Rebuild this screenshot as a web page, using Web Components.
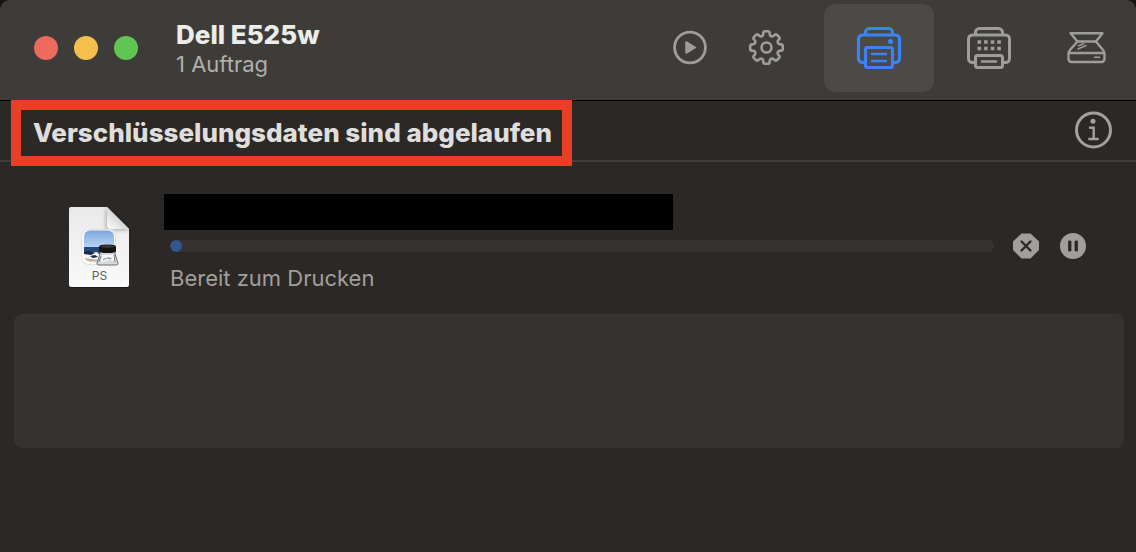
<!DOCTYPE html>
<html lang="de">
<head>
<meta charset="utf-8">
<meta name="viewport" content="width=device-width, initial-scale=1">
<title>Dell E525w</title>
<style>
body { margin: 0; min-height: 100vh; background: #2c2825; font-family: Inter, "Liberation Sans", sans-serif; }
</style>
</head>
<body>
<print-queue>
  <queue-toolbar slot="toolbar">
    <span slot="title">Dell E525w</span>
    <span slot="subtitle">1 Auftrag</span>
  </queue-toolbar>
  <queue-status slot="status">Verschlüsselungsdaten sind abgelaufen</queue-status>
  <print-job>Bereit zum Drucken</print-job>
  <empty-panel></empty-panel>
</print-queue>

<script>
const define = (name, html) => customElements.define(name, class extends HTMLElement {
  constructor() {
    super();
    this.attachShadow({ mode: 'open' }).innerHTML = html;
  }
});

const buttonReset = `
  button { appearance: none; border: 0; margin: 0; padding: 0; background: none; color: inherit; font: inherit;
    display: grid; place-items: center; }
  svg { display: block; }`;

function gearPath() {
  const at = (r, deg) => {
    const a = deg * Math.PI / 180;
    return (20 + r * Math.sin(a)).toFixed(2) + ' ' + (20 - r * Math.cos(a)).toFixed(2);
  };
  let d = 'M' + at(15.2, -12);
  for (let k = 0; k < 360; k += 45) {
    d += `Q${at(16.4, k - 10)} ${at(16.4, k - 6)}L${at(16.4, k + 6)}Q${at(16.4, k + 10)} ${at(15.2, k + 12)}`;
    d += `L${at(13.4, k + 14)}Q${at(11.2, k + 22.5)} ${at(13.4, k + 31)}L${at(15.2, k + 33)}`;
  }
  return d + 'Z';
}

define('print-queue', `
  <style>
    :host { display: block; }
    main { display: flex; flex-direction: column; }
  </style>
  <slot name="toolbar"></slot>
  <slot name="status"></slot>
  <main><slot></slot></main>`);

define('window-controls', `
  <style>
    :host { display: flex; gap: 16px; }
    ${buttonReset}
    button { width: 24px; height: 24px; border-radius: 50%; }
    .close { background: #ed6a5f; }
    .min { background: #f5bf4f; }
    .max { background: #61c555; }
  </style>
  <button class="close" aria-label="Schließen"></button>
  <button class="min" aria-label="Minimieren"></button>
  <button class="max" aria-label="Vergrößern"></button>`);

define('queue-toolbar', `
  <style>
    :host { display: block; background: #171614; }
    header { display: flex; align-items: center; box-sizing: border-box; height: 101px; padding: 0 8px 4px 34px;
      background: #3d3c38; border-bottom: 1px solid #000; border-radius: 10px 10px 0 0; }
    .names { flex: 1; margin-left: 38px; padding-top: 2px; white-space: nowrap; }
    h1 { margin: 0; font-size: 26px; line-height: 30px; font-weight: 800; color: #ececeb; }
    p { margin: 0; font-size: 22px; line-height: 28px; color: #b0afac; }
    nav { display: flex; align-items: center; color: #9e9d9a; }
    ${buttonReset}
    button { height: 88px; }
    .tool { width: 76px; }
    .tab { width: 110px; border-radius: 12px; }
    .tab[aria-pressed=true] { margin-left: 20px; background: #4b4a46; color: #3b82f7; }
    .scan { width: 84px; }
    svg { fill: none; stroke: currentColor; stroke-linecap: round; stroke-linejoin: round; }
    .solid { fill: currentColor; stroke: none; }
  </style>
  <header>
    <window-controls></window-controls>
    <div class="names">
      <h1><slot name="title"></slot></h1>
      <p><slot name="subtitle"></slot></p>
    </div>
    <nav>
      <button class="tool" aria-label="Fortsetzen">
        <svg width="40" height="40" viewBox="0 0 40 40" stroke-width="2.8"><circle cx="20" cy="19.5" r="15.4"/><path d="M16.200 14.200v10.600l9-5.300z" fill="currentColor" stroke-width="2"/></svg>
      </button>
      <button class="tool" aria-label="Einstellungen">
        <svg width="40" height="40" viewBox="0 0 40 40" stroke-width="2.600"><g transform="translate(.5 -.5)"><path d="${gearPath()}"/><circle cx="20" cy="20" r="5"/></g></svg>
      </button>
      <button class="tab" aria-label="Drucker" aria-pressed="true">
        <svg width="48" height="48" viewBox="0 0 48 48" stroke-width="3.200"><path d="M10.500 10V8.500a4 4 0 0 1 4-4h19a4 4 0 0 1 4 4V10"/><path d="M9.500 38.500H7.500a4 4 0 0 1-4-4V15a4 4 0 0 1 4-4h33a4 4 0 0 1 4 4v19.500a4 4 0 0 1-4 4h-2"/><rect x="10.500" y="23.500" width="27" height="20" rx="2"/><path d="M17 30h14M17 37h14" stroke-width="2.400"/><circle class="solid" cx="35.500" cy="17.500" r="2.600"/></svg>
      </button>
      <button class="tab" aria-label="Verbrauchsmaterial">
        <svg width="48" height="48" viewBox="0 0 48 48" stroke-width="3"><path d="M10.500 10V8.500a4 4 0 0 1 4-4h19a4 4 0 0 1 4 4V10"/><path d="M9.500 38.500H7.500a4 4 0 0 1-4-4V15a4 4 0 0 1 4-4h33a4 4 0 0 1 4 4v19.500a4 4 0 0 1-4 4h-2"/><rect x="10.500" y="31.500" width="27" height="12" rx="2"/><path d="M17 37.500h14" stroke-width="2.600"/><path d="M12.500 18h24M12.500 24.500h24" stroke-width="3.600" stroke-linecap="butt" stroke-dasharray="3.600 3"/></svg>
      </button>
      <button class="scan" aria-label="Scanner">
        <svg width="40" height="40" viewBox="-1 0 40 40" stroke-width="2.400"><path d="M3.500 5.200h32l-6.500 8.300H10.500z"/><path d="M10.500 13.500l-7.500 8.500c-1 1-1.500 2-1.500 3.500v5.500a3 3 0 0 0 3 3h30a3 3 0 0 0 3-3v-5.500c0-1.500-.5-2.500-1.500-3.500L29 13.500M2 25h35"/><path d="M11.500 17.800l5-2M11 21l8-3.500" stroke-width="1.500"/><path d="M27.500 29.300h5" stroke-width="1.600"/></svg>
      </button>
    </nav>
  </header>`);

define('queue-status', `
  <style>
    :host { display: flex; justify-content: space-between; align-items: flex-start; height: 59px; padding: 0 23px 0 21px;
      border-bottom: 2px solid #413d3b; }
    h2 { margin: 9px 0 0; padding: 0 10px 0 12px; font-size: 26px; line-height: 46px; font-weight: 800; color: #dfdedd;
      white-space: nowrap; outline: 10px solid #e93f26; }
    ${buttonReset}
    button { margin-top: 9px; color: #a3a19f; }
  </style>
  <h2><slot></slot></h2>
  <button aria-label="Information">
    <svg width="40" height="40" viewBox="0 0 40 40" fill="none" stroke="currentColor" stroke-width="3"><circle cx="20.500" cy="20" r="17"/><circle cx="20" cy="11.300" r="2.500" fill="currentColor" stroke="none"/><path d="M17 17.800h3.700v10.700M16.300 29h8.400" stroke-width="2.400" stroke-linecap="round"/></svg>
  </button>`);

define('document-icon', `
  <style>:host { display: block; } svg { display: block; overflow: visible; } text { font: 12px Inter, "Liberation Sans", sans-serif; }</style>
  <svg width="60" height="80" viewBox="0 0 60 80" role="img" aria-label="PostScript-Dokument">
    <defs>
      <linearGradient id="sky" x2="0" y2="1"><stop stop-color="#7ba5e0"/><stop offset="1" stop-color="#b9d3f3"/></linearGradient>
      <linearGradient id="fold" x1="0" y1="1" x2="1" y2="0"><stop stop-color="#fff"/><stop offset=".5" stop-color="#d7d7d7"/><stop offset="1" stop-color="#f5f5f5"/></linearGradient>
      <linearGradient id="page" x2="0" y2="1"><stop stop-color="#e9e9e9"/><stop offset="1" stop-color="#fafafa"/></linearGradient>
      <filter id="soft" x="-30%" y="-30%" width="160%" height="160%"><feGaussianBlur stdDeviation="2"/></filter>
      <clipPath id="paper"><path d="M2 0h36l22 22v56a2 2 0 0 1-2 2H2a2 2 0 0 1-2-2V2a2 2 0 0 1 2-2z"/></clipPath>
      <clipPath id="photo"><rect x="15" y="23.500" width="30" height="31" rx="6"/></clipPath>
    </defs>
    <path d="M0 78.500a2 2 0 0 0 2 2h56a2 2 0 0 0 2-2" fill="none" stroke="#111" stroke-opacity=".6"/>
    <g clip-path="url(#paper)">
      <path fill="url(#page)" d="M0 0h60v81H0z"/>
      <path d="M37 1v22h24z" fill="#666" opacity=".5" filter="url(#soft)"/>
    </g>
    <path d="M38 0v18a4 4 0 0 0 4 4h18z" fill="url(#fold)"/>
    <rect x="12.500" y="22.500" width="34" height="35" rx="7" fill="#f8f8f8" stroke="#e2e2e2"/>
    <g clip-path="url(#photo)">
      <path fill="url(#sky)" d="M15 23h30v17H15z"/>
      <path fill="#264779" d="M15 40h30v7H15z"/>
      <path fill="#f1f3f4" d="M15 45l6 1 7-1 3 3h14v8H15z"/>
      <path fill="#c4b299" d="M15 51l7 1 8 1v3H15z"/>
      <path fill="#1b2940" d="M15 45l5-1 6 2-4 2-7-1zM21 49l5-1 3 2-5 1z"/>
    </g>
    <path d="M31 44h15v3l3 9q.4 2-2 2H30q-2.500 0-2-2l3-9z" fill="#d7dadd" stroke="#6d6f70"/>
    <path d="M33 48h12l1 6-4-1-10 2z" fill="#f8fafb"/>
    <path d="M34 53l2-1.500 1 .8 2-2 1 2 2-1.500 1 1M30 55l2-6M46 55l-1-7" fill="none" stroke="#5a5d60" stroke-width=".8"/>
    <path d="M30 39.500q0-2 8.500-2t8.500 2V44q0 2-8.500 2T30 44z" fill="#151515"/>
    <ellipse cx="38.500" cy="39.500" rx="7" ry="1.200" fill="#3d3d3d"/>
    <text x="30.500" y="73" text-anchor="middle" fill="#606060">PS</text>
  </svg>`);

define('print-job', `
  <style>
    :host { display: grid; grid-template-columns: 60px 1fr auto; padding: 32px 50px 0 69px; }
    document-icon { margin-top: 13px; }
    .body { margin-left: 35px; min-width: 0; }
    .redacted { max-width: 509px; height: 36px; background: #000; }
    progress { appearance: none; display: block; box-sizing: border-box; width: calc(100% - 6px); height: 12px; margin: 10px 0 10px 6px;
      border: 0; border-radius: 6px; overflow: hidden; background: #363230; }
    progress::-webkit-progress-bar { background: #363230; border-radius: 6px; }
    progress::-webkit-progress-value { background: #33568f; border-radius: 6px; }
    p { margin: 0 0 0 6px; font-size: 22px; line-height: 32px; color: #a19f9d; }
    .actions { display: flex; align-items: flex-start; gap: 20px; margin: 38px 0 0 18px; }
    ${buttonReset}
  </style>
  <document-icon></document-icon>
  <div class="body">
    <div class="redacted"></div>
    <progress aria-label="Druckfortschritt" max="824" value="12"></progress>
    <p><slot></slot></p>
  </div>
  <div class="actions">
    <button aria-label="Auftrag abbrechen">
      <svg width="28" height="28" viewBox="0 0 28 28"><path d="M9.500 1.500h9L27 9.500v8.500l-8.500 8.500h-9L1 18V9.500z" fill="#a19f9d"/><path d="M9.500 9.500l9 9m0-9l-9 9" stroke="#2c2825" stroke-width="2.400" stroke-linecap="round"/></svg>
    </button>
    <button aria-label="Auftrag anhalten">
      <svg width="26" height="28" viewBox="0 0 26 28"><circle cx="13" cy="14" r="13" fill="#a19f9d"/><path d="M8.500 9h2.500v10H8.500zM15 9h2.500v10H15z" fill="#2c2825" stroke="#2c2825" stroke-width=".8" stroke-linejoin="round"/></svg>
    </button>
  </div>`);

define('empty-panel', `
  <style>:host { display: block; height: 134px; margin: 20px 12px 0 14px; border-radius: 8px; background: #363230; }</style>`);
</script>
</body>
</html>
